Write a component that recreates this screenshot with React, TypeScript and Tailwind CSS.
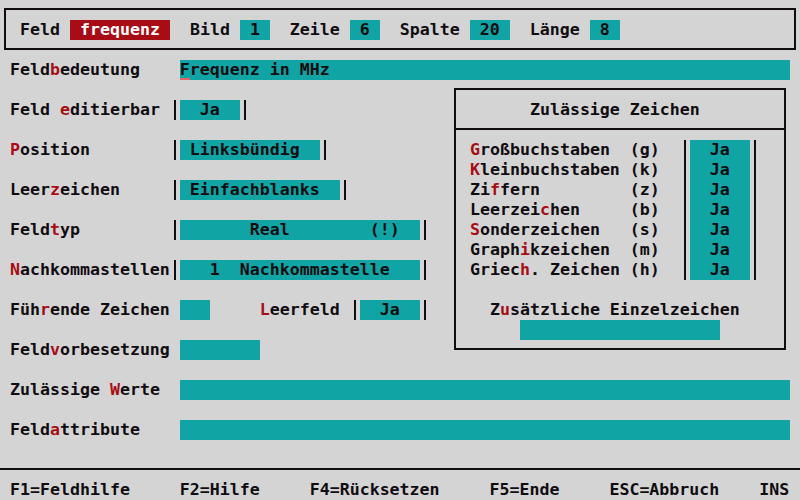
import React from "react";

const INK = "text-[#100c10]";

const R = ({ children }: { children: React.ReactNode }) => (
  <span className="text-[#a80c14]">{children}</span>
);

const Bar = () => (
  <span className="inline-block h-5 w-[10px] pl-1 align-top">
    <span className="block h-5 w-[2px] bg-[#100c10]" />
  </span>
);

const Teal = ({ w, children }: { w: string; children?: React.ReactNode }) => (
  <span className={`inline-block h-5 align-top overflow-hidden bg-[#10a4a4] ${w}`}>{children}</span>
);

const Row = ({ children }: { children?: React.ReactNode }) => (
  <div className="h-5 whitespace-pre">{children}</div>
);

export default function App() {
  const list: { pre: string; red: string; post: string; key: string }[] = [
    { pre: "", red: "G", post: "roßbuchstaben  ", key: "(g)" },
    { pre: "", red: "K", post: "leinbuchstaben ", key: "(k)" },
    { pre: "Zi", red: "f", post: "fern         ", key: "(z)" },
    { pre: "Leerzei", red: "c", post: "hen     ", key: "(b)" },
    { pre: "", red: "S", post: "onderzeichen   ", key: "(s)" },
    { pre: "Graph", red: "i", post: "kzeichen  ", key: "(m)" },
    { pre: "Griec", red: "h", post: ". Zeichen ", key: "(h)" },
  ];

  return (
    <div
      className={`w-[800px] h-[500px] overflow-hidden bg-[#d4d4d4] ${INK} font-['DejaVu_Sans_Mono','Liberation_Mono',monospace] font-bold text-[16.6px] leading-5`}
    >
      {/* Top status box */}
      <div className="h-[60px] pt-2 px-1">
        <div className="h-[42px] border-2 border-[#100c10] pt-[10px] pl-1">
          <Row>
            {" Feld "}
            <span className="inline-block h-5 align-top bg-[#a80c14] text-white w-[100px]">{" frequenz "}</span>
            {"  Bild "}
            <Teal w="w-[30px]">{" 1 "}</Teal>
            {"  Zeile "}
            <Teal w="w-[30px]">{" 6 "}</Teal>
            {"  Spalte "}
            <Teal w="w-[40px]">{" 20 "}</Teal>
            {"  Länge "}
            <Teal w="w-[30px]">{" 8 "}</Teal>
          </Row>
        </div>
      </div>

      {/* Feldbedeutung */}
      <Row>
        {" Feld"}
        <R>b</R>
        {"edeutung    "}
        <Teal w="w-[610px]">
          <span className="inline-block h-5 align-top border-b-2 border-[#e06464]">F</span>
          {"requenz in MHz"}
        </Teal>
      </Row>

      {/* Middle region */}
      <div className="flex h-[280px]">
        <div className="w-[450px]">
          <Row />
          <Row>
            {" Feld "}
            <R>e</R>
            {"ditierbar "}
            <Bar />
            <Teal w="w-[60px]">{"  Ja  "}</Teal>
            <Bar />
          </Row>
          <Row />
          <Row>
            {" "}
            <R>P</R>
            {"osition        "}
            <Bar />
            <Teal w="w-[140px]">{" Linksbündig  "}</Teal>
            <Bar />
          </Row>
          <Row />
          <Row>
            {" Leer"}
            <R>z</R>
            {"eichen     "}
            <Bar />
            <Teal w="w-[160px]">{" Einfachblanks  "}</Teal>
            <Bar />
          </Row>
          <Row />
          <Row>
            {" Feld"}
            <R>t</R>
            {"yp         "}
            <Bar />
            <Teal w="w-[240px]">{"       Real        (!)  "}</Teal>
            <Bar />
          </Row>
          <Row />
          <Row>
            {" "}
            <R>N</R>
            {"achkommastellen"}
            <Bar />
            <Teal w="w-[240px]">{"   1  Nachkommastelle   "}</Teal>
            <Bar />
          </Row>
          <Row />
          <Row>
            {" Füh"}
            <R>r</R>
            {"ende Zeichen "}
            <Teal w="w-[30px]">{"   "}</Teal>
            {"     "}
            <R>L</R>
            {"eerfeld "}
            <Bar />
            <Teal w="w-[60px]">{"  Ja  "}</Teal>
            <Bar />
          </Row>
          <Row />
          <Row>
            {" Feld"}
            <R>v</R>
            {"orbesetzung "}
            <Teal w="w-[80px]">{"        "}</Teal>
          </Row>
        </div>

        <div className="w-[350px] pl-1 pt-2">
          <div className="w-[332px] h-[262px] border-2 border-[#100c10]">
            <div className="h-[40px] border-b-2 border-[#100c10] pt-[10px] pl-1">
              <Row>{"       Zulässige Zeichen"}</Row>
            </div>
            <div className="pt-[10px] pl-1">
              {list.map((it) => (
                <Row key={it.key}>
                  {" " + it.pre}
                  <R>{it.red}</R>
                  {it.post + it.key + "  "}
                  <Bar />
                  <Teal w="w-[60px]">{"  Ja  "}</Teal>
                  <Bar />
                </Row>
              ))}
              <Row />
              <Row>
                {"   Z"}
                <R>u</R>
                {"sätzliche Einzelzeichen"}
              </Row>
              <Row>
                {"      "}
                <Teal w="w-[200px]" />
              </Row>
            </div>
          </div>
        </div>
      </div>

      <Row />
      <Row>
        {" Zulässige "}
        <R>W</R>
        {"erte  "}
        <Teal w="w-[610px]" />
      </Row>
      <Row />
      <Row>
        {" Feld"}
        <R>a</R>
        {"ttribute    "}
        <Teal w="w-[610px]" />
      </Row>
      <Row />
      <div className="h-5 pt-2">
        <div className="h-[2px] bg-[#100c10]" />
      </div>
      <Row>
        {" F1=Feldhilfe     F2=Hilfe     F4=Rücksetzen     F5=Ende     ESC=Abbruch    INS"}
      </Row>
    </div>
  );
}
